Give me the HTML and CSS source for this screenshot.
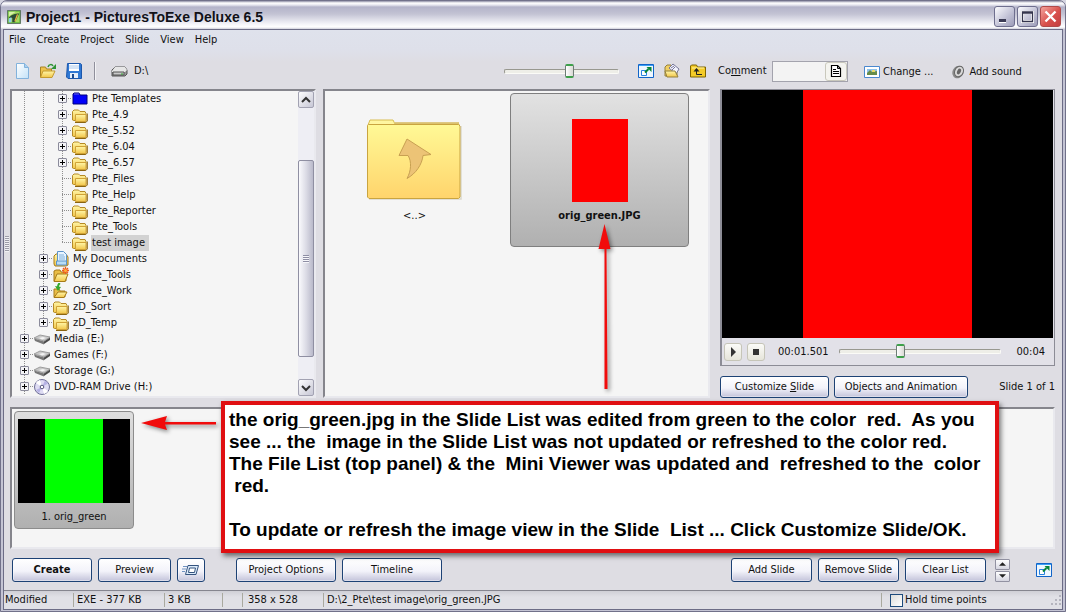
FILE: index.html
```html
<!DOCTYPE html>
<html lang="en">
<head>
<meta charset="utf-8">
<title>Project1 - PicturesToExe Deluxe 6.5</title>
<link rel="stylesheet" href="styles.css">
</head>
<body>
<svg class="defs" aria-hidden="true">
  <defs>
    <linearGradient id="gold" x1="0" y1="0" x2="0" y2="1"><stop offset="0" stop-color="#fff6a8"/><stop offset="1" stop-color="#f2c64a"/></linearGradient>
    <linearGradient id="big-gold" x1="0" y1="0" x2="0" y2="1"><stop offset="0" stop-color="#fff996"/><stop offset="1" stop-color="#ffd46c"/></linearGradient>
    <linearGradient id="sheet" x1="0" y1="0" x2="1" y2="1"><stop offset="0" stop-color="#ffffff"/><stop offset="1" stop-color="#c3e2f8"/></linearGradient>
    <symbol id="folder" viewBox="0 0 16 16">
      <path d="M.5 13V4.500L2 3h4.500L8 4.500h5l1 2v7H1.500z" fill="url(#gold)" stroke="#b58a26"/>
      <path d="M3.500 14.500v-7h10.500v7z" fill="url(#gold)" stroke="#d0a236"/>
      <path d="M15.300 6.500v7.500l-1.500 1.500H3" fill="none" stroke="#8a6410"/>
    </symbol>
    <symbol id="folder-blue" viewBox="0 0 16 16">
      <path d="M1 13V3l1-1h5l1 2h7v9z" fill="#0000fa" stroke="#00007c"/><path d="M2 3h5" stroke="#6a6ad8"/>
    </symbol>
    <symbol id="documents" viewBox="0 0 16 16">
      <path d="M1 13V5l2-2h10l2 3v8l-2 1H2z" fill="url(#gold)" stroke="#a67a18"/>
      <path d="M4.500.5h6l3 3v8h-9z" fill="#e8f4ff" stroke="#5d94c9"/>
      <path d="M6 4h5M6 6h6M6 8h6" stroke="#7fb1dc"/>
      <path d="M3.500 14v-4h10v4z" fill="#b9dcf5" stroke="#5d94c9"/>
    </symbol>
    <symbol id="folder-star" viewBox="0 0 16 16">
      <path d="M1 14V4l2-1h4l1 2h5v9z" fill="#e9bd46" stroke="#a67a18"/>
      <path d="M1 14.500L4 7h11l-3 7.500z" fill="url(#gold)" stroke="#a67a18"/>
      <path d="M12.500 0v7M9 3.500h7M10 1l5 5M15 1l-5 5" stroke="#ef5a1d" stroke-width="1.300"/><circle cx="12.500" cy="3.500" r="1.500" fill="#ffb03a"/>
    </symbol>
    <symbol id="folder-check" viewBox="0 0 16 16">
      <path d="M1 14V6h5l1 2h5v6z" fill="#e9bd46" stroke="#a67a18"/>
      <path d="M1 14.500L5 9h9l-3 5.500z" fill="url(#gold)" stroke="#a67a18"/>
      <path d="M7 0c-2 1-2 3-2 4" fill="none" stroke="#37a92c" stroke-width="2"/><path d="M2 3l6 1-3 4z" fill="#37a92c"/>
    </symbol>
    <symbol id="drive" viewBox="0 0 16 16">
      <path d="M0 7l6-3 10 2-6 4z" fill="#c9c9c9" stroke="#9d9d9d"/>
      <path d="M0 7.500l10 3v3L1 10z" fill="#777"/><path d="M10 10.500l6-4v2.500l-6 4z" fill="#4a4a4a"/>
      <path d="M5 7l4-1 3 1-4 1.500z" fill="#f4f4f4"/>
    </symbol>
    <symbol id="disc" viewBox="0 0 16 16">
      <circle cx="8" cy="8" r="7.500" fill="#dedcf3" stroke="#6d6d96"/>
      <path d="M8 8L2 4a7 7 0 0 1 4-3zM8 8l6 4a7 7 0 0 1-4 3z" fill="#fff"/>
      <path d="M8 8L11 1.500l3 3zM8 8l-6 3 3 3z" fill="#b6b2e4"/>
      <circle cx="8" cy="8" r="1.800" fill="#fff" stroke="#55557c"/>
    </symbol>
    <symbol id="fullscreen" viewBox="0 0 16 16">
      <path d="M.5 1.500h15v13H.5z" fill="#eef7ff" stroke="#1164c8"/><path d="M1 2h14v1H1z" fill="#3ba0f5"/>
      <path d="M3.500 7.500h5v5h-5z" fill="#fff" stroke="#2782df"/>
      <path d="M7 9.500l3.500-3.500" stroke="#078538" stroke-width="2"/><path d="M8.500 4H13.500v5z" fill="#078538"/>
    </symbol>
  </defs>
</svg>

<div class="window">
  <header class="titlebar">
    <svg class="app-icon" viewBox="0 0 16 16"><path d="M.5.500h15v15H.5z" fill="#63b83d" stroke="#566a5d"/><path d="M2 2h12v12H2z" fill="#a5d860"/><path d="M2 2h8L2 7z" fill="#d7f0a8"/><path d="M2 9c3-4 7-5 12-5L9 14H6V9z" fill="#2c4c35"/><path d="M2 10l3-2v6H2z" fill="#8ecff0"/><path d="M9 13l3-8" stroke="#f3b342" stroke-width="1.500"/></svg>
    <h1 class="title">Project1 - PicturesToExe Deluxe 6.5</h1>
    <div class="window-controls">
      <button class="wc" aria-label="Minimize"><svg viewBox="0 0 19 19"><path d="M4 13h7v3H4z" fill="#fff"/><path d="M4 12h7v3H4z" fill="#3b3b55"/></svg></button>
      <button class="wc" aria-label="Maximize"><svg viewBox="0 0 19 19"><path d="M4.500 5.500h10v9h-10z" fill="none" stroke="#fff" stroke-width="3"/><path d="M4.500 5h10v9.500h-10zM4 6h11" fill="none" stroke="#34344e" stroke-width="1.300"/></svg></button>
      <button class="wc close" aria-label="Close"><svg viewBox="0 0 19 19"><path d="M4.500 4.500l10 10M14.500 4.500l-10 10" stroke="#fff" stroke-width="2.400"/></svg></button>
    </div>
  </header>

  <div class="client">
    <nav class="menu">
      <button>File</button><button>Create</button><button>Project</button><button>Slide</button><button>View</button><button>Help</button>
    </nav>

    <div class="toolbar columns">
      <div class="tools-file">
        <button class="tool" aria-label="New"><svg viewBox="0 0 16 16"><path d="M2.500.5h8l4 4v11h-12z" fill="url(#sheet)" stroke="#82b2dc"/><path d="M10.500.5v4h4" fill="#a8d0f0" stroke="#82b2dc"/></svg></button>
        <button class="tool" aria-label="Open"><svg viewBox="0 0 16 16"><path d="M.5 14V4h5l1 2h5v8z" fill="#eec34e" stroke="#a98323"/><path d="M.5 14.500L3 8h12l-3 6.500z" fill="url(#gold)" stroke="#c49a2f"/><path d="M8 4c1-3 4-3 5-1" fill="none" stroke="#2f9536" stroke-width="1.500"/><path d="M16 1v5h-5z" fill="#2f9536"/></svg></button>
        <button class="tool" aria-label="Save"><svg viewBox="0 0 16 16"><path d="M1.500.5h13l1 1v14H2L.5 14z" fill="#2f78d4" stroke="#1c57ab"/><path d="M3 1h10v7H3z" fill="#fff"/><path d="M3 3h10M3 5h10" stroke="#a8c8ed"/><path d="M4 10h8v5H4z" fill="#e5eefa"/><path d="M6 11h2v4H6z" fill="#1c4b90"/></svg></button>
        <span class="tool-sep"></span>
        <svg class="tool-drive" viewBox="0 0 17 16"><path d="M1 7l3-3h10l2 3v4l-2 2H1z" fill="#969696" stroke="#555"/><path d="M1 8l3-4h10l2 3-2 2H1z" fill="#e6e6e6"/><path d="M2 9h11v3H2z" fill="#c9c9c9" stroke="#555"/><path d="M10 11h2" stroke="#2aa52a"/></svg>
        <span>D:\</span>
      </div>
      <div class="tools-view">
        <input class="slider zoom" type="range" value="58" aria-label="Thumbnail size">
        <button class="tool" aria-label="Full screen"><svg><use href="#fullscreen"/></svg></button>
        <button class="tool" aria-label="Favourites"><svg viewBox="0 0 16 16"><path d="M1 13V4l2-2h4l2 3h4v8z" fill="#f0cf64" stroke="#94803c"/><path d="M5 5l4-4 6 5-3 5z" fill="#f4f5ff" stroke="#777799"/><path d="M7 5l3-2M8 7l3-3" stroke="#777799"/><path d="M3 14L1 8h10l3 6z" fill="url(#gold)" stroke="#94803c"/></svg></button>
        <button class="tool" aria-label="Parent folder"><svg viewBox="0 0 16 16"><path d="M.5 14V3l1-1h5l1 2h8v10z" fill="#f4cb28" stroke="#7f6500"/><path d="M2 5h12" stroke="#fff3a0"/><path d="M6.500 6v5.500H12" fill="none" stroke="#222"/><path d="M3.500 8.500h6l-3-3.500z" fill="#222"/></svg></button>
      </div>
      <div class="tools-slide">
        <label for="comment">Co<u>m</u>ment</label>
        <span class="comment-field"><input id="comment" type="text"><button class="note" aria-label="Edit comment"><svg viewBox="0 0 12 12"><path d="M1.500.5h6l3 3v8h-9z" fill="#fff" stroke="#000" stroke-width="1.200"/><path d="M7.500.5v3h3M3 4.500h3M3 6.500h6M3 8.500h6" fill="none" stroke="#000"/></svg></button></span>
        <button class="tool-text change"><svg viewBox="0 0 16 14"><path d="M.5 1.500h15v11H.5z" fill="#fff" stroke="#4a88cf"/><path d="M3 4h10v6H3z" fill="#8fc2ea"/><path d="M3 8l3-3 2 2 5-1v4H3z" fill="#668c4a"/><path d="M8 5h3v2H8z" fill="#e8db6a"/></svg>Change ...</button>
        <button class="tool-text"><svg viewBox="0 0 16 14"><ellipse cx="8" cy="7" rx="5.500" ry="6.500" fill="#8a8a8a" transform="rotate(25 8 7)"/><ellipse cx="9" cy="6.500" rx="4.300" ry="5.500" fill="#d8d8d8" stroke="#666" transform="rotate(25 9 6.500)"/><ellipse cx="9" cy="6.500" rx="1.800" ry="3" fill="#666" transform="rotate(25 9 6.500)"/></svg>Add sound</button>
      </div>
    </div>

    <main class="workspace columns">
      <div class="grip"></div>
      <section class="panel tree-panel">
        <ul class="tree">
          <li><i></i><i></i><i class="plus"></i><svg><use href="#folder-blue"/></svg><span>Pte Templates</span></li>
          <li><i></i><i></i><i class="plus"></i><svg><use href="#folder"/></svg><span>Pte_4.9</span></li>
          <li><i></i><i></i><i class="plus"></i><svg><use href="#folder"/></svg><span>Pte_5.52</span></li>
          <li><i></i><i></i><i class="plus"></i><svg><use href="#folder"/></svg><span>Pte_6.04</span></li>
          <li><i></i><i></i><i class="plus"></i><svg><use href="#folder"/></svg><span>Pte_6.57</span></li>
          <li><i></i><i></i><i class="leaf"></i><svg><use href="#folder"/></svg><span>Pte_Files</span></li>
          <li><i></i><i></i><i class="leaf"></i><svg><use href="#folder"/></svg><span>Pte_Help</span></li>
          <li><i></i><i></i><i class="leaf"></i><svg><use href="#folder"/></svg><span>Pte_Reporter</span></li>
          <li><i></i><i></i><i class="leaf"></i><svg><use href="#folder"/></svg><span>Pte_Tools</span></li>
          <li><i></i><i></i><i class="leaf last"></i><svg><use href="#folder"/></svg><span class="selected">test image</span></li>
          <li><i></i><i class="plus"></i><svg><use href="#documents"/></svg><span>My Documents</span></li>
          <li><i></i><i class="plus"></i><svg><use href="#folder-star"/></svg><span>Office_Tools</span></li>
          <li><i></i><i class="plus"></i><svg><use href="#folder-check"/></svg><span>Office_Work</span></li>
          <li><i></i><i class="plus"></i><svg><use href="#folder"/></svg><span>zD_Sort</span></li>
          <li><i></i><i class="plus last"></i><svg><use href="#folder"/></svg><span>zD_Temp</span></li>
          <li><i class="plus"></i><svg><use href="#drive"/></svg><span>Media (E:)</span></li>
          <li><i class="plus"></i><svg><use href="#drive"/></svg><span>Games (F:)</span></li>
          <li><i class="plus"></i><svg><use href="#drive"/></svg><span>Storage (G:)</span></li>
          <li><i class="plus"></i><svg><use href="#disc"/></svg><span>DVD-RAM Drive (H:)</span></li>
        </ul>
        <div class="scrollbar">
          <button class="scroll-btn" aria-label="Scroll up"><svg viewBox="0 0 10 8"><path d="M1 6l4-4 4 4" fill="none" stroke="#333" stroke-width="2"/></svg></button>
          <div class="track"><div class="thumb"></div></div>
          <button class="scroll-btn" aria-label="Scroll down"><svg viewBox="0 0 10 8"><path d="M1 2l4 4 4-4" fill="none" stroke="#333" stroke-width="2"/></svg></button>
        </div>
      </section>

      <section class="panel files">
        <figure class="file">
          <svg class="big-folder" viewBox="1 2 96 83">
            <path d="M2 8l2-5h23l2 4h64v8H2z" fill="#fff6a0" stroke="#d8bc52"/>
            <path d="M3 82h92V9" fill="none" stroke="#dad8cc" stroke-width="1.500"/>
            <path d="M1.500 8.500l1-1h90l1.500 1.500v71l-1.500 1.500H3l-1.500-1.500z" fill="url(#big-gold)" stroke="#c9a440"/>
            <path d="M29 6h64" stroke="#d6b85c" stroke-width="1.500"/>
            <path d="M41 22l24 15.500-8 1c-1 9-7 18-16 23 4-7 5-17 1-23h-9z" fill="#ecc376" stroke="#c8a052"/>
          </svg>
          <figcaption>&lt;..&gt;</figcaption>
        </figure>
        <figure class="file active">
          <div class="swatch"></div>
          <figcaption>orig_green.JPG</figcaption>
        </figure>
      </section>

      <section class="preview">
        <div class="player">
          <div class="screen"><div class="screen-image"></div></div>
          <div class="controls">
            <button class="play" aria-label="Play"><svg viewBox="0 0 10 10"><path d="M3 0l5 5-5 5z" fill="#333"/></svg></button>
            <button class="play" aria-label="Stop"><svg viewBox="0 0 10 10"><path d="M2 2h6v6H2z" fill="#333"/></svg></button>
            <span class="time">00:01.501</span>
            <input class="slider seek" type="range" value="37" aria-label="Position">
            <span class="time">00:04</span>
          </div>
        </div>
        <div class="slide-actions">
          <button class="btn customize">Customize <u>S</u>lide</button>
          <button class="btn objects">Objects and Animation</button>
          <span class="counter">Slide 1 of 1</span>
        </div>
      </section>
    </main>

    <section class="panel slide-list">
      <figure class="slide">
        <div class="slide-screen"><div class="slide-image"></div></div>
        <figcaption>1. orig_green</figcaption>
      </figure>
    </section>

    <div class="actions">
      <button class="btn create">Create</button>
      <button class="btn prev">Preview</button>
      <button class="btn window-preview" aria-label="Windowed preview"><svg viewBox="0 0 18 12"><path d="M6 1.500h10.500l-2.500 9H3.500z" fill="#dcebfb" stroke="#33527e"/><path d="M7.500 4h6l-1 4.500h-6z" fill="#fff" stroke="#33527e"/><path d="M1 2.500h4M0 5h4M0 7.500h3" stroke="#6f93c2"/></svg></button>
      <button class="btn wide options">Project Options</button>
      <button class="btn wide">Timeline</button>
      <span class="spring"></span>
      <button class="btn std">Add Slide</button>
      <button class="btn std">Remove Slide</button>
      <button class="btn std">Clear List</button>
      <span class="spinner">
        <button aria-label="Move up"><svg viewBox="0 0 8 4"><path d="M0 4l4-4 4 4z" fill="#222"/></svg></button>
        <button aria-label="Move down"><svg viewBox="0 0 8 4"><path d="M0 0l4 4 4-4z" fill="#222"/></svg></button>
      </span>
      <button class="tool expand" aria-label="Full screen list"><svg><use href="#fullscreen"/></svg></button>
    </div>

    <footer class="status">
      <span class="cell modified">Modified</span>
      <span class="cell exe">EXE - 377 KB</span>
      <span class="cell size">3 KB</span>
      <span class="cell blank"></span>
      <span class="cell dims">358 x 528</span>
      <span class="cell path">D:\2_Pte\test image\orig_green.JPG</span>
      <span class="cell hold"><input id="hold" type="checkbox"><label for="hold">Hold time points</label></span>
      <svg class="resize" viewBox="0 0 12 12"><path d="M9 1h2v2H9zM5 5h2v2H5zM9 5h2v2H9zM1 9h2v2H1zM5 9h2v2H5zM9 9h2v2H9z" fill="#b4b4be"/></svg>
    </footer>
  </div>

  <svg class="arrow arrow-up" viewBox="0 0 24 170"><path d="M10.500 0l6 25h-4l1 137v3h-3V25H4.500z" fill="#f10b0b"/></svg>
  <svg class="arrow arrow-left" viewBox="0 0 80 20"><path d="M1 10l26-7-2 6h51v2.500H25l2 5.500z" fill="#f10b0b"/></svg>
  <p class="callout">the orig_green.jpg in the Slide List was edited from green to the color  red.  As you
see ... the  image in the Slide List was not updated or refreshed to the color red.
The File List (top panel) &amp; the  Mini Viewer was updated and  refreshed to the  color
 red.

To update or refresh the image view in the Slide  List ... Click Customize Slide/OK.</p>
</div>
</body>
</html>
```
FILE: styles.css
```css
* { box-sizing: border-box; }

body {
  margin: 0;
  background: #d6d6e2;
  color: #111;
  font: 11px/14px "DejaVu Sans Condensed", "DejaVu Sans", sans-serif;
}

button, input { margin: 0; font: inherit; color: inherit; }
button { padding: 0; border: 0; background: none; white-space: nowrap; }
figure, p, h1, ul { margin: 0; padding: 0; }
svg { display: block; flex: none; }
.defs { position: absolute; width: 0; height: 0; }

.window {
  position: relative;
  display: flex;
  flex-direction: column;
  min-height: 100vh;
  border: 1px solid #71718a;
  border-radius: 7px 7px 0 0;
  background: #c4c4d4;
  overflow: hidden;
}

.titlebar {
  display: flex;
  align-items: center;
  gap: 5px;
  height: 28px;
  padding: 3px 4px 0 6px;
  background: linear-gradient(#8e8ea6 0, #ffffff 2px, #e6e6ef 4px, #b3b3c9 6px, #c3c3d4 13px, #f4f4f9 23px, #ffffff 26px, #d0d0dc 28px);
}
.app-icon { width: 14px; height: 14px; }
.title { flex: 1; font: bold 14px/18px "Liberation Sans", Arial, sans-serif; color: #111118; }
.window-controls { display: flex; gap: 2px; }
.wc {
  width: 21px;
  height: 21px;
  border: 1px solid #6e6e8e;
  border-radius: 3px;
  background: linear-gradient(135deg, #fbfbfe, #bfbfd4 60%, #9c9cb8);
}
.wc svg { width: 19px; height: 19px; }
.close { border-color: #b04a4a; background: linear-gradient(135deg, #f3a49d, #d9514d 55%, #c23e40); }

.client {
  flex: 1;
  display: flex;
  flex-direction: column;
  margin: 0 2px 1px;
  border: 1px solid #6c6c86;
  background: #dedde3;
}

.menu {
  display: flex;
  gap: 11px;
  height: 20px;
  padding-left: 5px;
  background: linear-gradient(#dfe2ec, #dee0ea);
}

.columns {
  display: grid;
  grid-template-columns: 6px minmax(0, 306fr) 7px minmax(0, 387fr) 10px minmax(0, 335fr);
  padding-right: 7px;
}

.toolbar { height: 39px; padding-top: 3px; align-items: center; background: linear-gradient(#dee0ea, #dedde3 12px); }
.tools-file, .tools-view, .tools-slide { display: flex; align-items: center; }
.tools-file { grid-column: 1 / 3; padding-left: 10px; gap: 10px; }
.tools-view { grid-column: 4; justify-content: flex-end; gap: 10px; padding-right: 4px; }
.tools-slide { grid-column: 5 / 7; padding-left: 8px; }
.tool, .tool svg { width: 16px; height: 16px; }
.tool-sep { width: 2px; height: 18px; margin: 0 5px 0 2px; border-left: 1px solid #8f8f9b; border-right: 1px solid #f3f3f6; }
.tool-drive { width: 17px; height: 16px; margin-right: -4px; }
.tools-slide label { width: 54px; }
.comment-field { display: flex; width: 76px; height: 21px; border: 1px solid #a3a3ad; background: #f3f3f3; }
.comment-field input { flex: 1; min-width: 0; border: 0; background: none; }
.note {
  display: grid;
  place-items: center;
  width: 22px;
  border: 1px solid #c9c8bc;
  border-radius: 3px;
  background: #f4f4ef;
}
.note svg { width: 12px; height: 12px; }
.tool-text { display: flex; align-items: center; gap: 3px; padding-top: 2px; }
.tool-text svg { width: 16px; height: 14px; }
.change { margin: 0 17px 0 16px; }

.slider { appearance: none; height: 14px; background: none; }
.slider::-webkit-slider-runnable-track {
  height: 5px;
  border: 1px solid;
  border-color: #98988f #fbfbf7 #fbfbf7 #98988f;
  border-radius: 2px;
  background: #eeeee8;
}
.slider::-webkit-slider-thumb {
  appearance: none;
  width: 9px;
  height: 14px;
  margin-top: -6px;
  border: 1px solid #6d7c74;
  border-top: 2px solid #3da04a;
  border-bottom: 2px solid #3da04a;
  border-radius: 2px;
  background: linear-gradient(90deg, #fff, #d9d9d4);
}
.zoom { width: 115px; margin-right: 9px; }

.workspace { flex: 1; }
.grip {
  align-self: center;
  justify-self: center;
  width: 4px;
  height: 16px;
  background: repeating-linear-gradient(#9c9ca8 0 1px, #f0f0f4 1px 2px);
}
.panel {
  border: 2px solid;
  border-color: #85858c #e9e9ee #e9e9ee #85858c;
  background: #f5f5f5;
}
.tree-panel { grid-column: 2; display: flex; }
.tree { flex: 1; min-width: 0; padding-left: 3px; list-style: none; }
.tree li { display: flex; align-items: center; height: 16px; }
.tree svg { width: 16px; height: 16px; }
.tree span { margin-left: 3px; padding: 0 1px; line-height: 16px; white-space: nowrap; }
.tree .selected { padding: 0 4px 0 1px; background: #d2d2d2; }
.tree i {
  position: relative;
  flex: none;
  width: 19px;
  height: 16px;
  background: repeating-linear-gradient(#8f8f8f 0 1px, transparent 1px 2px) 9px 0 / 1px 16px no-repeat;
}
.tree .leaf, .tree .plus {
  background:
    repeating-linear-gradient(#8f8f8f 0 1px, transparent 1px 2px) 9px 0 / 1px 16px no-repeat,
    repeating-linear-gradient(90deg, #8f8f8f 0 1px, transparent 1px 2px) 9px 7px / 10px 1px no-repeat;
}
.tree .last { background-size: 1px 8px, 10px 1px; }
.tree .plus::before {
  content: "";
  position: absolute;
  left: 5px;
  top: 3px;
  width: 9px;
  height: 9px;
  box-sizing: border-box;
  border: 1px solid #8b8b9b;
  border-radius: 1px;
  background:
    linear-gradient(#000, #000) center / 5px 1px no-repeat,
    linear-gradient(#000, #000) center / 1px 5px no-repeat,
    #f3f3f6;
}

.scrollbar { display: flex; flex-direction: column; width: 16px; background: #eeeef4; }
.scroll-btn {
  display: grid;
  place-items: center;
  height: 17px;
  border: 1px solid #a2a2b2;
  border-radius: 2px;
  background: linear-gradient(135deg, #fdfdfe, #c7c7d5);
}
.scroll-btn svg { width: 10px; height: 8px; }
.track { flex: 1; display: flex; flex-direction: column; }
.track::before { content: ""; flex: 53; }
.track::after { content: ""; flex: 22; }
.thumb {
  flex: 198;
  border: 1px solid #8f8fa2;
  border-radius: 2px;
  background:
    repeating-linear-gradient(#8e8ea4 0 1px, #f6f6fa 1px 2px) center / 6px 8px no-repeat,
    linear-gradient(90deg, #fafafd, #dcdce6 50%, #b9b9ca);
}

.files { grid-column: 4; display: flex; flex-wrap: wrap; align-content: flex-start; gap: 6px; padding-top: 2px; }
.file {
  display: flex;
  flex-direction: column;
  align-items: center;
  gap: 7px;
  width: 179px;
  height: 154px;
  padding-top: 25px;
  border: 1px solid transparent;
  border-radius: 4px;
}
.active { border-color: #7f7f7f; background: linear-gradient(#e2e2e2, #b0b0b0); font-weight: bold; }
.big-folder { width: 96px; height: 83px; }
.swatch { width: 56px; height: 83px; background: #ff0000; }

.preview { grid-column: 6; display: flex; flex-direction: column; gap: 10px; }
.player {
  flex: 1;
  display: flex;
  flex-direction: column;
  padding-right: 1px;
  border: 1px solid #8c8c96;
  border-left-width: 2px;
  background: #e2e1e8;
}
.screen { flex: 1; display: flex; justify-content: center; background: #000; }
.screen-image { width: 51%; background: #ff0000; }
.controls { display: flex; align-items: center; gap: 5px; height: 27px; padding: 0 8px 0 2px; }
.play {
  display: grid;
  place-items: center;
  width: 18px;
  height: 18px;
  border: 1px solid #c6c5b8;
  border-radius: 3px;
  background: linear-gradient(#fbfbf8, #e6e5da);
}
.play svg { width: 10px; height: 10px; }
.time { margin: 0 0 0 8px; }
.seek { flex: 1; min-width: 0; margin: 0 2px 0 5px; }
.slide-actions { display: flex; align-items: center; gap: 5px; }
.counter { flex: 1; text-align: right; white-space: nowrap; }

.btn {
  height: 24px;
  border: 1px solid #1d4275;
  border-radius: 3px;
  background: linear-gradient(#ffffff, #f3f3fa 55%, #c3c3da);
  box-shadow: inset 0 0 0 1px #ffffff66;
}
.slide-actions .btn { height: 22px; }
.customize { width: 109px; }
.objects { width: 134px; }

.slide-list { margin: 9px 7px 0 6px; padding: 2px; height: 142px; }
.slide {
  display: flex;
  flex-direction: column;
  width: 120px;
  height: 118px;
  padding: 7px 3px 0;
  border: 1px solid #8c8c8c;
  border-radius: 4px;
  background: linear-gradient(#dedede, #b0b0b0);
}
.slide-screen { display: flex; justify-content: center; height: 84px; background: #000; }
.slide-image { width: 58px; background: #00ff00; }
.slide figcaption { margin-top: 7px; text-align: center; }

.actions { display: flex; align-items: center; gap: 6px; padding: 9px 10px 8px 8px; }
.create { width: 80px; font-weight: bold; }
.prev { width: 73px; }
.window-preview { display: grid; place-items: center; width: 28px; }
.window-preview svg { width: 18px; height: 12px; }
.wide { width: 100px; }
.options { margin-left: 25px; }
.spring { flex: 1; }
.std { width: 81px; }
.spinner { display: flex; flex-direction: column; gap: 1px; margin: 0 20px 0 3px; }
.spinner button {
  display: grid;
  place-items: center;
  width: 15px;
  height: 11px;
  border: 1px solid #9292a2;
  border-radius: 1px;
  background: linear-gradient(#fff, #d5d5e0);
}
.spinner svg { width: 7px; height: 4px; }

.status { display: flex; align-items: center; height: 19px; border-top: 1px solid #85858f; background: linear-gradient(#cfcfd6, #e0e0e6 6px); }
.cell { height: 14px; padding-left: 3px; border-right: 1px solid #a9a99f; white-space: nowrap; }
.modified { width: 70px; padding-left: 1px; }
.exe { width: 91px; }
.size { width: 58px; }
.blank { width: 20px; }
.dims { width: 81px; padding-left: 5px; }
.path { flex: 1; }
.hold { display: flex; align-items: center; gap: 2px; width: 168px; padding-left: 8px; border: 0; }
.hold input { appearance: none; width: 13px; height: 13px; border: 1px solid #1d4b7c; background: linear-gradient(135deg, #dededb, #fff); }
.resize { width: 12px; height: 12px; }

/* Annotations drawn over the window */
.callout {
  position: absolute;
  left: 220px;
  top: 400px;
  width: 778px;
  height: 152px;
  padding: 4px 0 0 4px;
  border: 4px solid #e00f12;
  background: #fff;
  box-shadow: 2px 3px 5px #0008;
  color: #000;
  font: bold 19px/22px "Liberation Sans", Arial, sans-serif;
  white-space: pre;
}
.arrow { position: absolute; filter: drop-shadow(2px 2px 2px #0007); }
.arrow-up { left: 593px; top: 223px; width: 24px; height: 170px; }
.arrow-left { left: 139px; top: 412px; width: 80px; height: 20px; }
```
